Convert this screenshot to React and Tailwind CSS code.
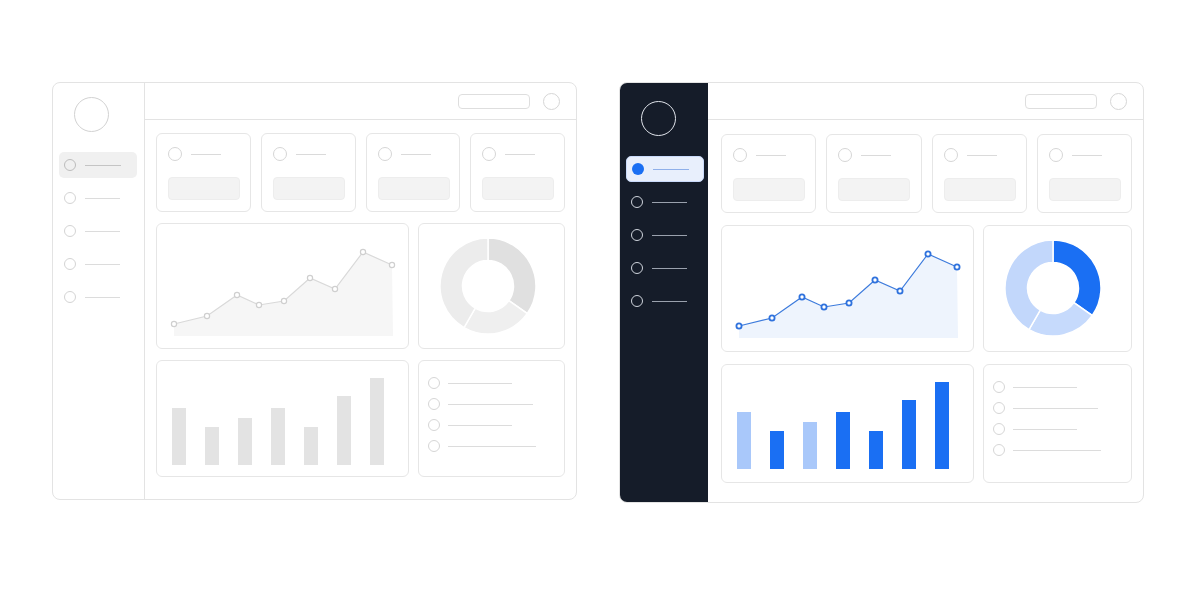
import React from 'react';

const linePoints = [
  [17, 100], [50, 92], [80, 71], [102, 81], [127, 77], [153, 54], [178, 65], [206, 28], [235, 41]
];

const barHeights = [57, 38, 47, 57, 38, 69, 87];
const listWidths = [64, 85, 64, 88];

const polar = (cx, cy, r, a) => {
  const rad = ((a - 90) * Math.PI) / 180;
  return [cx + r * Math.cos(rad), cy + r * Math.sin(rad)];
};

const arcPath = (cx, cy, ro, ri, a0, a1) => {
  const large = a1 - a0 > 180 ? 1 : 0;
  const [x0, y0] = polar(cx, cy, ro, a0);
  const [x1, y1] = polar(cx, cy, ro, a1);
  const [x2, y2] = polar(cx, cy, ri, a1);
  const [x3, y3] = polar(cx, cy, ri, a0);
  return `M${x0} ${y0} A${ro} ${ro} 0 ${large} 1 ${x1} ${y1} L${x2} ${y2} A${ri} ${ri} 0 ${large} 0 ${x3} ${y3} Z`;
};

const LineChart = ({ color }) => {
  const line = linePoints.map((p) => p.join(',')).join(' ');
  const area = `M17,112 L${linePoints.map((p) => p.join(',')).join(' L')} L236,112 Z`;
  return (
    <svg width="253" height="126" viewBox="0 0 253 126">
      <path d={area} fill={color ? '#eef4fd' : '#f6f6f6'} />
      <polyline points={line} fill="none" stroke={color ? '#3d7bdc' : '#d9d9d9'} strokeWidth="1.2" />
      {linePoints.map(([x, y], i) => (
        <circle
          key={i}
          cx={x}
          cy={y}
          r="2.6"
          fill="#fff"
          stroke={color ? '#2f72dd' : '#cfcfcf'}
          strokeWidth={color ? 1.8 : 1.2}
        />
      ))}
    </svg>
  );
};

const Donut = ({ color }) => {
  const segs = color
    ? [
        [0, 125, '#1a6ff3'],
        [125, 210, '#c6dafc'],
        [210, 360, '#c2d7fb']
      ]
    : [
        [0, 125, '#e0e0e0'],
        [125, 210, '#efefef'],
        [210, 360, '#ececec']
      ];
  return (
    <svg width="146" height="126" viewBox="0 0 146 126">
      {segs.map(([a0, a1, c], i) => (
        <path key={i} d={arcPath(69, 62, 48, 25.5, a0, a1)} fill={c} stroke="#fff" strokeWidth="1.5" />
      ))}
    </svg>
  );
};

const Panel = ({ color }) => {
  const card = 'rounded-[6px] border border-[#e6e6e6] bg-white';
  return (
    <div
      className={`flex w-[525px] overflow-hidden rounded-[8px] border border-[#e3e3e3] bg-white ${
        color ? 'h-[421px]' : 'h-[418px]'
      }`}
    >
      {/* Sidebar */}
      <div
        className={`flex shrink-0 flex-col ${
          color ? 'w-[88px] bg-[#151c29] pt-[18px]' : 'w-[92px] border-r border-[#e3e3e3] pt-[14px]'
        }`}
      >
        <div
          className={`ml-[21px] h-[35px] w-[35px] rounded-full border ${
            color ? 'border-[#dfe3ea]' : 'border-[#d2d2d2]'
          }`}
        />
        <div className="mt-[20px] flex flex-col gap-[7px]">
          {[0, 1, 2, 3, 4].map((i) => {
            const active = i === 0;
            if (active) {
              return (
                <div
                  key={i}
                  className={`ml-[6px] flex h-[26px] w-[78px] items-center rounded-[5px] pl-[5px] ${
                    color ? 'border border-[#c9dafa] bg-[#e8effc]' : 'bg-[#f0f0f0]'
                  }`}
                >
                  <div
                    className={`h-[12px] w-[12px] rounded-full ${
                      color ? 'bg-[#1a6ff3]' : 'border border-[#bdbdbd]'
                    }`}
                  />
                  <div className={`ml-[9px] h-px w-[36px] ${color ? 'bg-[#8fb0ea]' : 'bg-[#c4c4c4]'}`} />
                </div>
              );
            }
            return (
              <div key={i} className="ml-[11px] flex h-[26px] items-center">
                <div
                  className={`h-[12px] w-[12px] rounded-full border ${
                    color ? 'border-[#cfd4dc]' : 'border-[#d4d4d4]'
                  }`}
                />
                <div className={`ml-[9px] h-px w-[35px] ${color ? 'bg-[#9aa1ad]' : 'bg-[#dcdcdc]'}`} />
              </div>
            );
          })}
        </div>
      </div>

      {/* Main */}
      <div className="flex min-w-0 flex-1 flex-col">
        <div className="flex h-[37px] shrink-0 items-center justify-end gap-[13px] border-b border-[#e3e3e3] pr-[16px]">
          <div className="h-[15px] w-[72px] rounded-[4px] border border-[#dedede]" />
          <div className="h-[17px] w-[17px] rounded-full border border-[#d6d6d6]" />
        </div>

        <div
          className={`flex flex-col ${
            color ? 'gap-[12px] pl-[13px] pr-[11px] pt-[14px]' : 'gap-[11px] px-[11px] pt-[13px]'
          }`}
        >
          {/* Stat cards */}
          <div className="grid grid-cols-4 gap-[10px]">
            {[0, 1, 2, 3].map((i) => (
              <div key={i} className={`${card} h-[79px] px-[11px] pt-[13px]`}>
                <div className="flex items-center">
                  <div className="h-[14px] w-[14px] rounded-full border border-[#d6d6d6]" />
                  <div className="ml-[9px] h-px w-[30px] bg-[#dadada]" />
                </div>
                <div className="mt-[16px] h-[23px] w-[72px] rounded-[4px] border border-[#ededed] bg-[#f3f3f3]" />
              </div>
            ))}
          </div>

          {/* Charts */}
          <div className="grid grid-cols-[253px_1fr] gap-[9px]">
            <div className={`${card} ${color ? 'h-[127px]' : 'h-[126px]'} overflow-hidden`}>
              <LineChart color={color} />
            </div>
            <div className={`${card} ${color ? 'h-[127px]' : 'h-[126px]'} overflow-hidden`}>
              <Donut color={color} />
            </div>
          </div>

          {/* Bars + list */}
          <div className="grid grid-cols-[253px_1fr] gap-[9px]">
            <div
              className={`${card} ${
                color ? 'h-[119px] pb-[13px]' : 'h-[117px] pb-[11px]'
              } flex items-end gap-[19px] pl-[15px]`}
            >
              {barHeights.map((h, i) => (
                <div
                  key={i}
                  className={`w-[14px] ${
                    color ? (i === 0 || i === 2 ? 'bg-[#a9c8fa]' : 'bg-[#1a6ff3]') : 'bg-[#e3e3e3]'
                  }`}
                  style={{ height: h }}
                />
              ))}
            </div>
            <div className={`${card} ${color ? 'h-[119px]' : 'h-[117px]'} flex flex-col gap-[9px] pl-[9px] pt-[16px]`}>
              {listWidths.map((w, i) => (
                <div key={i} className="flex h-[12px] items-center">
                  <div className="h-[12px] w-[12px] rounded-full border border-[#d6d6d6]" />
                  <div className="ml-[8px] h-px bg-[#dcdcdc]" style={{ width: w }} />
                </div>
              ))}
            </div>
          </div>
        </div>
      </div>
    </div>
  );
}

export default function App() {
  return (
    <div className="h-[600px] w-[1200px] bg-white">
      <div className="flex items-start gap-[42px] pl-[52px] pt-[82px]">
        <Panel />
        <Panel color />
      </div>
    </div>
  );
}
